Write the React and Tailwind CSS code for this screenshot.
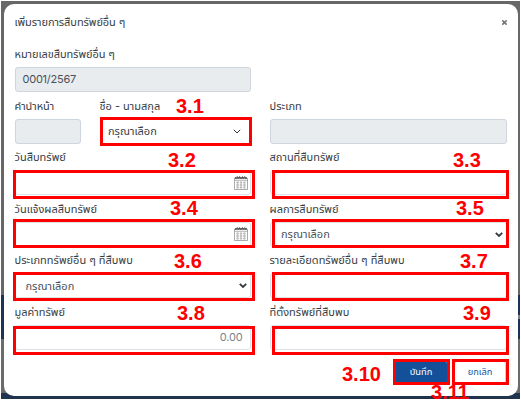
import React from "react";

const THAI = "font-['Inter','Noto_Sans_Thai','Noto_Sans',sans-serif]";

function Label({ children, className = "" }) {
  return (
    <div className={`h-[26px] whitespace-nowrap text-[11px] leading-[26px] ${className}`}>
      <span>{children}</span>
    </div>
  );
}

function Field({ label, labelClass, disabled, className = "", children }) {
  return (
    <div className="flex h-[51.6px] flex-col">
      <Label className={labelClass}>{label}</Label>
      <div
        className={`flex h-[25px] items-center rounded-[3px] border text-[11px] whitespace-nowrap ${
          disabled ? "border-[#cfd5dc] bg-[#e9ecef]" : "border-[#dde2e8] bg-white"
        } ${className}`}
      >
        {children}
      </div>
    </div>
  );
}

function CalendarIcon() {
  return (
    <svg className="h-[14px] w-[14px]" viewBox="0 0 15 15" fill="none" stroke="#8a8a8a">
      <path d="M.5 2.5h14v12H.5z" strokeWidth="0.8" />
      <path d="M1 2.2h13" stroke="#666" strokeWidth="2" strokeDasharray="2 .7" />
      <path d="M3.5.3v2M6 .3v2M9 .3v2M11.5.3v2" stroke="#444" strokeWidth="1" />
      <path d="M.5 4.6h14" strokeWidth="0.7" />
      <path
        d="M3 6.3h1.6v1.4H3zM6.7 6.3h1.6v1.4H6.7zM10.4 6.3H12v1.4h-1.6zM3 9h1.6v1.4H3zM6.7 9h1.6v1.4H6.7zM10.4 9H12v1.4h-1.6zM3 11.6h1.6V13H3zM6.7 11.6h1.6V13H6.7zM10.4 11.6H12V13h-1.6z"
        strokeWidth="0.6"
      />
    </svg>
  );
}

function Chevron({ className, width }) {
  return (
    <svg className={className} viewBox="0 0 8 5" fill="none" stroke="#343a40" strokeWidth={width}>
      <path d="M.8.8 4 4 7.2.8" />
    </svg>
  );
}

const boxes = [
  "left-[100px] top-[117px] w-[152px] h-[29px]",
  "left-[13px] top-[170px] w-[242px] h-[29px]",
  "left-[272px] top-[170px] w-[237px] h-[29px]",
  "left-[13px] top-[219px] w-[242px] h-[29px]",
  "left-[272px] top-[219px] w-[237px] h-[29px]",
  "left-[13px] top-[272px] w-[242px] h-[29px]",
  "left-[272px] top-[272px] w-[237px] h-[29px]",
  "left-[13px] top-[326px] w-[242px] h-[29px]",
  "left-[272px] top-[326px] w-[237px] h-[29px]",
  "left-[393px] top-[359px] w-[57px] h-[26px]",
  "left-[452px] top-[359px] w-[57px] h-[26px]",
];

const marks = [
  ["3.1", "left-[176px] top-[96px]"],
  ["3.2", "left-[168px] top-[150px]"],
  ["3.3", "left-[453px] top-[150px]"],
  ["3.4", "left-[170px] top-[198px]"],
  ["3.5", "left-[456px] top-[198px]"],
  ["3.6", "left-[174px] top-[251px]"],
  ["3.7", "left-[460px] top-[251px]"],
  ["3.8", "left-[177px] top-[303px]"],
  ["3.9", "left-[463px] top-[303px]"],
  ["3.10", "left-[342px] top-[364px]"],
  ["3.11", "left-[431px] top-[382px]"],
];

function Backdrop() {
  return (
    <div className="absolute inset-x-px top-px flex h-[398px] flex-col">
      <div className="h-[294px] bg-[#666766]" />
      <div className="flex h-[44px] flex-col bg-[#1b3357]">
        <div className="mt-[20px] ml-auto h-[4px] w-[10px] bg-[#7b8087]" />
      </div>
      <div className="h-[54px] bg-[#6b6c69]" />
      <div className="h-[6px] bg-[#20334f]" />
    </div>
  );
}

export default function App() {
  return (
    <div className={`relative h-[401px] w-[521px] overflow-hidden bg-white pt-[4px] pl-[4px] text-[#373d43] ${THAI}`}>
      <Backdrop />
      <main className="relative flex h-[392px] w-[514px] flex-col rounded-[10px] bg-white pr-[11px] pl-[10.5px]">
        <header className="flex h-[37px] items-center justify-between">
          <h1 className="text-[11px] whitespace-nowrap">
            <span className="tracking-[-0.07px]">เพิ่มรายการสืบทรัพย์อื่น ๆ</span>
          </h1>
          <svg className="h-[5px] w-[5px]" viewBox="0 0 5 5" stroke="#777" strokeWidth="1.6">
            <path d="M.3.3 4.7 4.7M4.7.3.3 4.7" />
          </svg>
        </header>
        <section className="grid grid-cols-[236px_237px] gap-x-[19px]">
          <Field label="หมายเลขสืบทรัพย์อื่น ๆ" labelClass="tracking-[-0.07px]" disabled className="pl-[7px] text-[#495057]">
            <span className="tracking-[-0.25px]">0001/2567</span>
          </Field>
          <div />
          <div className="grid grid-cols-[66px_151px] gap-x-[19px]">
            <Field label="คำนำหน้า" labelClass="tracking-[-0.1px]" disabled />
            <Field label="ชื่อ - นามสกุล" className="justify-between pr-[9px] pl-[7.5px]">
              <span>กรุณาเลือก</span>
              <Chevron className="h-[5px] w-[8px]" width="1" />
            </Field>
          </div>
          <Field label="ประเภท" disabled />
          <Field label="วันสืบทรัพย์" className="justify-end pr-[2px]">
            <CalendarIcon />
          </Field>
          <Field label="สถานที่สืบทรัพย์" />
          <Field label="วันแจ้งผลสืบทรัพย์" className="justify-end pr-[2px]">
            <CalendarIcon />
          </Field>
          <Field label="ผลการสืบทรัพย์" className="justify-between pr-[3px] pl-[10.5px] text-[#495057]">
            <span>กรุณาเลือก</span>
            <Chevron className="h-[5px] w-[8px]" width="1.8" />
          </Field>
          <Field label="ประเภททรัพย์อื่น ๆ ที่สืบพบ" className="justify-between pr-[3px] pl-[10px] text-[#495057]">
            <span>กรุณาเลือก</span>
            <Chevron className="h-[5px] w-[8px]" width="1.8" />
          </Field>
          <Field label="รายละเอียดทรัพย์อื่น ๆ ที่สืบพบ" />
          <Field label="มูลค่าทรัพย์" className="justify-end pr-[7px] text-[#7b838a]">
            <span className="tracking-[-0.2px]">0.00</span>
          </Field>
          <Field label="ที่ตั้งทรัพย์ที่สืบพบ" />
        </section>
        <footer className="mt-[10px] flex justify-end gap-[7px] pr-[1px]">
          <button className="flex h-[23px] w-[52px] items-center justify-center rounded-[3px] bg-[#14509a] text-white">
            <span className="text-[9.3px]">บันทึก</span>
          </button>
          <button className="flex h-[23px] w-[52px] items-center justify-center rounded-[3px] border border-[#c3cfdf] bg-white text-[#14509a]">
            <span className="text-[9.3px]">ยกเลิก</span>
          </button>
        </footer>
      </main>
      {boxes.map((b) => (
        <div key={b} className={`absolute border-[3px] border-[#fe0000] ${b}`} />
      ))}
      <div className="absolute inset-x-0 top-0 h-[399px] overflow-hidden font-['Liberation_Sans',sans-serif]">
        {marks.map(([text, pos]) => (
          <span key={text} className={`absolute text-[20px] leading-[20px] font-bold text-[#fe0000] ${pos}`}>
            {text}
          </span>
        ))}
      </div>
    </div>
  );
}
